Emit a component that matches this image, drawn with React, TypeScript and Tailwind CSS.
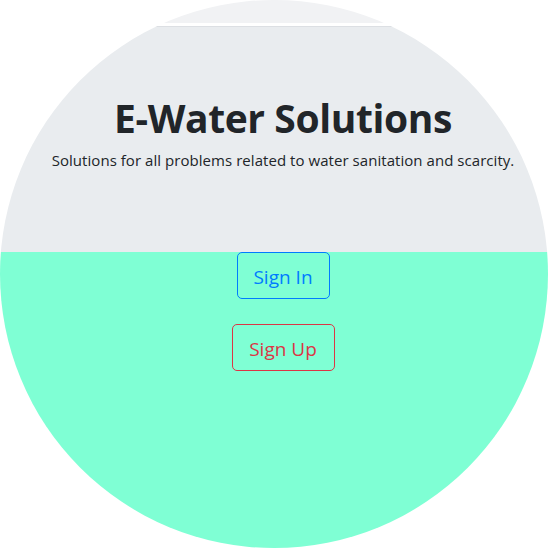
export default function App() {
  return (
    <div
      className="w-[548px] h-[548px] rounded-full overflow-hidden bg-white flex flex-col text-[#212529]"
      style={{ fontFamily: '"Open Sans", "Noto Sans", sans-serif' }}
    >
      {/* top nav strip */}
      <div className="h-[23px] bg-[#f1f2f4] shrink-0" />
      <div className="h-[3px] bg-white shrink-0" />
      <div className="h-px bg-[#dcdfe3] shrink-0" />

      {/* Jumbotron */}
      <div className="h-[225px] shrink-0 bg-[#e9ecef] flex flex-col items-center pt-[67px] pl-[18px]">
        <h1 className="text-[39px] leading-[48px] font-bold tracking-[-0.4px]">E-Water Solutions</h1>
        <p className="mt-[6px] text-[15px] leading-6 tracking-[0.05px]">
          Solutions for all problems related to water sanitation and scarcity.
        </p>
      </div>

      {/* Actions */}
      <div className="flex-1 bg-[#7fffd4] flex flex-col items-center pl-[18px]">
        <button className="h-[47px] w-[93px] pt-[3px] rounded-[5px] border border-[#007bff] text-[#007bff] text-[19px]">
          Sign In
        </button>
        <button className="mt-[25px] h-[47px] w-[103px] pt-[3px] rounded-[5px] border border-[#dc3545] text-[#dc3545] text-[19px]">
          Sign Up
        </button>
      </div>
    </div>
  );
}
